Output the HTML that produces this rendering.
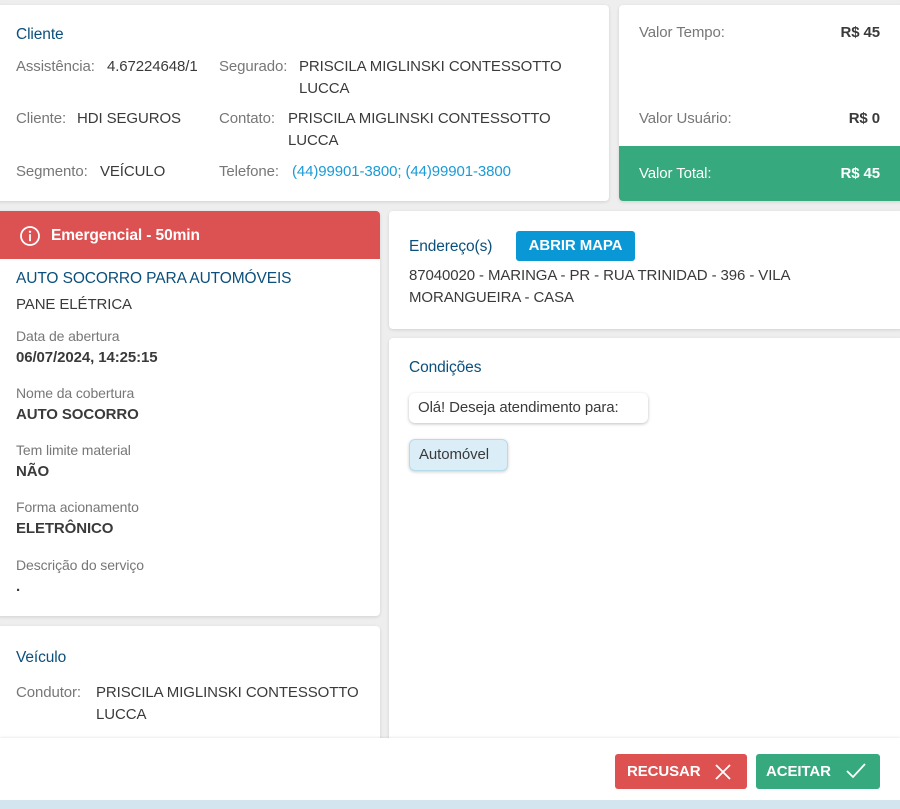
<!DOCTYPE html>
<html><head><meta charset="utf-8"><style>
*{margin:0;padding:0;box-sizing:border-box}
body{width:900px;height:809px;background:#eeeeee;font-family:"Liberation Sans",sans-serif;font-size:15px;color:#3a3a3a;position:relative;overflow:hidden;letter-spacing:-0.1px}
.card{position:absolute;background:#fff;border-radius:4px;box-shadow:0 1px 3px rgba(0,0,0,.12)}
.t{position:absolute;white-space:nowrap}
.h{color:#0b4f7c;font-size:15.5px}
.l{color:#777}
.b{font-weight:bold}
.s{font-size:14px;color:#777}
a{color:#1a9bd7;text-decoration:none}
</style></head><body>

<div class="card" style="left:-4px;top:5px;width:613px;height:196px"></div>
<div class="t h" style="left:16px;top:26px">Cliente</div>
<div class="t l" style="left:16px;top:58px">Assistência:</div><div class="t" style="left:107px;top:58px">4.67224648/1</div>
<div class="t l" style="left:219px;top:58px">Segurado:</div><div class="t" style="left:299px;top:58px">PRISCILA MIGLINSKI CONTESSOTTO</div>
<div class="t" style="left:299px;top:80px">LUCCA</div>
<div class="t l" style="left:16px;top:110px">Cliente:</div><div class="t" style="left:77px;top:110px">HDI SEGUROS</div>
<div class="t l" style="left:219px;top:110px">Contato:</div><div class="t" style="left:288px;top:110px">PRISCILA MIGLINSKI CONTESSOTTO</div>
<div class="t" style="left:288px;top:132px">LUCCA</div>
<div class="t l" style="left:16px;top:163px">Segmento:</div><div class="t" style="left:100px;top:163px">VEÍCULO</div>
<div class="t l" style="left:219px;top:163px">Telefone:</div><div class="t" style="left:292px;top:163px"><a>(44)99901-3800; (44)99901-3800</a></div>

<div class="card" style="left:619px;top:5px;width:285px;height:196px;overflow:hidden">
<div style="position:absolute;left:0;top:141px;width:100%;height:55px;background:#36a97e"></div></div>
<div class="t l" style="left:639px;top:24px">Valor Tempo:</div>
<div class="t b" style="right:20px;top:24px">R$ 45</div>
<div class="t l" style="left:639px;top:110px">Valor Usuário:</div>
<div class="t b" style="right:20px;top:110px">R$ 0</div>
<div class="t" style="left:639px;top:165px;color:#fff">Valor Total:</div>
<div class="t b" style="right:20px;top:165px;color:#fff">R$ 45</div>

<div class="card" style="left:-4px;top:211px;width:384px;height:405px;overflow:hidden">
<div style="position:absolute;left:0;top:0;width:100%;height:48px;background:#dc5151"></div></div>
<svg style="position:absolute;left:19px;top:225px" width="22" height="22" viewBox="0 0 22 22"><circle cx="11" cy="11" r="9" fill="none" stroke="#fff" stroke-width="1.8"/><circle cx="11" cy="6.8" r="1.2" fill="#fff"/><rect x="10.1" y="9.2" width="1.8" height="7" fill="#fff"/></svg>
<div class="t b" style="left:51px;top:227px;color:#fff;font-size:15.5px">Emergencial - 50min</div>
<div class="t h" style="left:16px;top:270px">AUTO SOCORRO PARA AUTOMÓVEIS</div>
<div class="t" style="left:16px;top:296px">PANE ELÉTRICA</div>
<div class="t s" style="left:16px;top:328px">Data de abertura</div>
<div class="t b" style="left:16px;top:349px">06/07/2024, 14:25:15</div>
<div class="t s" style="left:16px;top:385px">Nome da cobertura</div>
<div class="t b" style="left:16px;top:406px">AUTO SOCORRO</div>
<div class="t s" style="left:16px;top:442px">Tem limite material</div>
<div class="t b" style="left:16px;top:463px">NÃO</div>
<div class="t s" style="left:16px;top:499px">Forma acionamento</div>
<div class="t b" style="left:16px;top:520px">ELETRÔNICO</div>
<div class="t s" style="left:16px;top:557px">Descrição do serviço</div>
<div class="t b" style="left:16px;top:578px">.</div>

<div class="card" style="left:-4px;top:626px;width:384px;height:130px"></div>
<div class="t h" style="left:16px;top:649px">Veículo</div>
<div class="t l" style="left:16px;top:684px">Condutor:</div><div class="t" style="left:96px;top:684px">PRISCILA MIGLINSKI CONTESSOTTO</div>
<div class="t" style="left:96px;top:706px">LUCCA</div>

<div class="card" style="left:389px;top:211px;width:515px;height:118px"></div>
<div class="t h" style="left:409px;top:238px">Endereço(s)</div>
<div style="position:absolute;left:516px;top:231px;width:119px;height:30px;background:#0a97d6;border-radius:3px;color:#fff;font-weight:bold;font-size:15px;text-align:center;line-height:30px">ABRIR MAPA</div>
<div class="t" style="left:409px;top:267px">87040020 - MARINGA - PR - RUA TRINIDAD - 396 - VILA</div>
<div class="t" style="left:409px;top:289px">MORANGUEIRA - CASA</div>

<div class="card" style="left:389px;top:338px;width:515px;height:420px"></div>
<div class="t h" style="left:409px;top:359px">Condições</div>
<div style="position:absolute;left:409px;top:393px;width:239px;height:30px;background:#fff;border-radius:6px;box-shadow:0 1px 3px rgba(0,0,0,.25);line-height:30px;padding-left:9px;white-space:nowrap">Olá! Deseja atendimento para:</div>
<div style="position:absolute;left:409px;top:439px;width:99px;height:32px;background:#dbeef8;border:1px solid #b5dced;border-radius:6px;box-shadow:0 1px 3px rgba(0,0,0,.2);line-height:30px;padding-left:9px">Automóvel</div>

<div style="position:absolute;left:0;top:738px;width:900px;height:62px;background:#fff;box-shadow:0 -1px 2px rgba(0,0,0,.08)"></div>
<div style="position:absolute;left:0;top:800px;width:900px;height:9px;background:#d3e6ef"></div>
<div style="position:absolute;left:615px;top:754px;width:132px;height:35px;background:#dd5151;border-radius:3px;color:#fff;font-weight:bold;font-size:15px;line-height:35px;padding-left:12px">RECUSAR
<svg style="position:absolute;left:100px;top:10px" width="16" height="16" viewBox="0 0 16 16"><path d="M1 1L15 15M15 1L1 15" stroke="#fff" stroke-width="1.8"/></svg></div>
<div style="position:absolute;left:756px;top:754px;width:124px;height:35px;background:#36a97e;border-radius:3px;color:#fff;font-weight:bold;font-size:15px;line-height:35px;padding-left:10px">ACEITAR
<svg style="position:absolute;left:90px;top:9px" width="20" height="16" viewBox="0 0 20 16"><path d="M1 8L7 14L19 1" fill="none" stroke="#fff" stroke-width="1.8"/></svg></div>
</body></html>
